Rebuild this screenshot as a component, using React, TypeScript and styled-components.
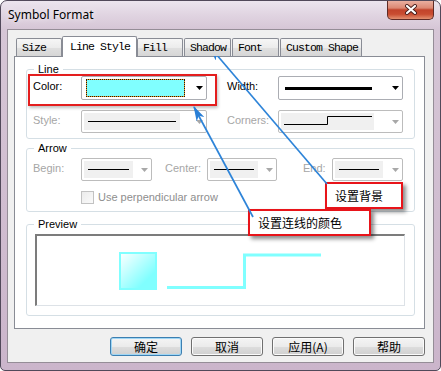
import styled, { createGlobalStyle } from "styled-components";

const GlobalStyle = createGlobalStyle`
  html, body { margin: 0; padding: 0; background: #ffffff; }
  body { font-family: "Liberation Sans", Arial, sans-serif; overflow: hidden; }
  * { box-sizing: border-box; }
`;

// window frame (Win7 basic, lavender)
const Window = styled.div`
  position: relative;
  width: 441px;
  height: 371px;
  border: 1px solid #51495a;
  border-radius: 7px 7px 5px 5px;
  background: linear-gradient(180deg, #ece5ee 0px, #e0d4e1 14px, #d6c6d6 28px, #cbb5cb 100%);
  padding: 0 6px 7px 6px;
  display: flex;
  flex-direction: column;
  overflow: hidden;
`;

const TitleBar = styled.div`
  height: 28px;
  display: flex;
  justify-content: space-between;
  align-items: center;
  padding-left: 1px;
  flex-shrink: 0;
`;

const Title = styled.span`
  font: 12px/16px "Noto Sans", "Liberation Sans", sans-serif;
  color: #000;
  text-shadow: 0 0 6px #ffffff;
`;

const CloseButton = styled.div`
  align-self: flex-start;
  margin-top: -1px;
  width: 47px;
  height: 20px;
  border: 1px solid #5f2b26;
  border-top: none;
  border-radius: 0 0 5px 5px;
  background: linear-gradient(180deg, #ecb4a6 0%, #dc8873 42%, #c2432b 52%, #c94d31 75%, #e39070 100%);
  display: flex;
  align-items: center;
  justify-content: center;
`;

const Client = styled.div`
  flex: 1;
  border: 1px solid #958d97;
  background: #f0f0f0;
  padding: 6px 8px 0 6px;
  display: flex;
  flex-direction: column;
`;

const TabStrip = styled.div`
  position: relative;
  z-index: 1;
  display: flex;
  align-items: flex-end;
  height: 20px;
  padding-left: 2px;
`;

const Tab = styled.div<{ $w: number; $ml?: number; $active?: boolean }>`
  width: ${(p) => p.$w}px;
  margin-left: ${(p) => p.$ml ?? 0}px;
  height: ${(p) => (p.$active ? 21 : 18)}px;
  margin-bottom: ${(p) => (p.$active ? -1 : 0)}px;
  border: 1px solid #898c95;
  border-bottom: none;
  border-radius: 2px 2px 0 0;
  background: ${(p) =>
    p.$active ? "#ffffff" : "linear-gradient(180deg, #f6f6f6 0%, #ececec 50%, #e0e0e0 51%, #d6d6d6 100%)"};
  padding: ${(p) => (p.$active ? "2px 0 0 7px" : "1px 0 0 5px")};
  font: 11.5px/15px "Liberation Mono", "DejaVu Sans Mono", monospace;
  letter-spacing: -0.9px;
  color: #000;
  white-space: nowrap;
`;

const Panel = styled.div`
  height: 273px;
  border: 1px solid #898c95;
  background: #ffffff;
  padding: 6px 9px 0 11px;
  display: flex;
  flex-direction: column;
`;

const Group = styled.fieldset<{ $mt?: number; $pb: number }>`
  margin: ${(p) => p.$mt ?? 0}px 0 0 0;
  padding: 0 11px ${(p) => p.$pb}px 6px;
  border: 1px solid #d5dfe5;
  border-radius: 3px;
  min-width: 0;
`;

const Legend = styled.legend`
  margin-left: 1px;
  padding: 0 4px;
  font-size: 11px;
  line-height: 13px;
  color: #000;
`;

const Row = styled.div<{ $h: number; $mt?: number; $pl?: number }>`
  display: flex;
  align-items: center;
  height: ${(p) => p.$h}px;
  margin-top: ${(p) => p.$mt ?? 0}px;
  padding-left: ${(p) => p.$pl ?? 0}px;
`;

const Label = styled.span<{ $w: number; $ml?: number; $off?: boolean }>`
  flex-shrink: 0;
  width: ${(p) => p.$w}px;
  margin-left: ${(p) => p.$ml ?? 0}px;
  padding-bottom: 3px;
  font-size: 11px;
  line-height: 13px;
  color: ${(p) => (p.$off ? "#a6a6a6" : "#000")};
  white-space: nowrap;
`;

const Combo = styled.div<{ $w: number; $h: number; $off?: boolean }>`
  flex-shrink: 0;
  width: ${(p) => p.$w}px;
  height: ${(p) => p.$h}px;
  border: 1px solid ${(p) => (p.$off ? "#bcbcbc" : "#abadb3")};
  border-radius: 2px;
  background: #ffffff;
  padding: 2px;
  display: flex;
  align-items: stretch;
`;

const Field = styled.div<{ $w: number; $off?: boolean }>`
  width: ${(p) => p.$w}px;
  background: ${(p) => (p.$off ? "#f0f0f0" : "#ffffff")};
  display: flex;
  align-items: center;
  padding: 0 4px;
`;

const Stroke = styled.div<{ $t: number }>`
  flex: 1;
  height: ${(p) => p.$t}px;
  background: #000;
`;

const FocusRing = styled.div`
  margin-left: 2px;
  width: 99px;
  border: 1px dotted #1a1a1a;
  background-color: #f0a020;
  display: flex;
`;

const Swatch = styled.div`
  flex: 1;
  background: #80ffff;
`;

const DropArrow = styled.div`
  margin-left: auto;
  width: 10px;
  display: flex;
  align-items: center;
  justify-content: center;
`;

const CheckRow = styled.div`
  display: flex;
  align-items: center;
  gap: 4px;
  font-size: 11px;
  line-height: 13px;
  color: #8e8e8e;
`;

const CheckBox = styled.div`
  width: 13px;
  height: 13px;
  border: 1px solid #c2c2c2;
  background: linear-gradient(135deg, #ebebeb, #fafafa);
`;

const PreviewBox = styled.div`
  margin: 3px -2px 0 2px;
  height: 72px;
  background: #ffffff;
  border-top: 2px solid #7c7c7c;
  border-left: 2px solid #7c7c7c;
  border-right: 1px solid #dde2e7;
  border-bottom: 1px solid #dde2e7;
`;

const ButtonRow = styled.div`
  display: flex;
  justify-content: flex-end;
  gap: 9px;
  margin-top: 8px;
`;

const Button = styled.button<{ $default?: boolean }>`
  width: 72px;
  height: 19px;
  padding: 0;
  border: 1px solid ${(p) => (p.$default ? "#3c7fb1" : "#707070")};
  border-radius: 3px;
  background: linear-gradient(180deg, #f4f4f4 0%, #ebebeb 50%, #dddddd 51%, #d0d0d0 100%);
  box-shadow: inset 0 0 0 1px ${(p) => (p.$default ? "#9fd6f5" : "#fbfbfb")};
  font: 12px/17px "Noto Sans CJK SC", sans-serif;
  color: #000;
`;

const Highlight = styled.div`
  position: absolute;
  left: 27px;
  top: 73px;
  width: 189px;
  height: 32px;
  border: 2px solid #e41e1e;
  box-shadow: 1px 2px 3px rgba(0, 0, 0, 0.25);
  pointer-events: none;
`;

const Callout = styled.div<{ $x: number; $y: number; $w: number }>`
  position: absolute;
  left: ${(p) => p.$x - 1}px;
  top: ${(p) => p.$y - 1}px;
  width: ${(p) => p.$w}px;
  height: 27px;
  border: 2px solid #e8141a;
  background: #ffffff;
  box-shadow: 3px 3px 4px rgba(0, 0, 0, 0.45);
  padding-left: 8px;
  font: 12px/23px "Noto Sans CJK SC", sans-serif;
  color: #000;
`;

const Overlay = styled.svg`
  position: absolute;
  left: -1px;
  top: -1px;
  pointer-events: none;
`;

function Arrow({ off }: { off?: boolean }) {
  return (
    <DropArrow>
      <svg width="7" height="4" viewBox="0 0 7 4">
        <polygon points="0,0 7,0 3.5,4" fill={off ? "#a8a8a8" : "#000"} />
      </svg>
    </DropArrow>
  );
}

function LineCombo({ w, fw }: { w: number; fw: number }) {
  return (
    <Combo $w={w} $h={23} $off>
      <Field $w={fw} $off>
        <Stroke $t={1} />
      </Field>
      <Arrow off />
    </Combo>
  );
}

export default function App() {
  return (
    <>
      <GlobalStyle />
      <Window>
        <TitleBar>
          <Title>Symbol Format</Title>
          <CloseButton>
            <svg width="14" height="11" viewBox="0 0 14 11">
              <path d="M3 2 L11 9 M11 2 L3 9" stroke="#4a1f1c" strokeWidth="4" strokeLinecap="round" />
              <path d="M3 2 L11 9 M11 2 L3 9" stroke="#ffffff" strokeWidth="2.2" strokeLinecap="round" />
            </svg>
          </CloseButton>
        </TitleBar>

        <Client>
          <TabStrip>
            <Tab $w={46}>Size</Tab>
            <Tab $w={75} $active>
              Line Style
            </Tab>
            <Tab $w={46}>Fill</Tab>
            <Tab $w={47} $ml={1}>
              Shadow
            </Tab>
            <Tab $w={47} $ml={1}>
              Font
            </Tab>
            <Tab $w={82} $ml={1}>
              Custom Shape
            </Tab>
          </TabStrip>

          <Panel>
            <Group $pb={5}>
              <Legend>Line</Legend>
              <Row $h={24}>
                <Label $w={48}>Color:</Label>
                <Combo $w={126} $h={24}>
                  <FocusRing>
                    <Swatch />
                  </FocusRing>
                  <Arrow />
                </Combo>
                <Label $w={51} $ml={20}>
                  Width:
                </Label>
                <Combo $w={125} $h={24}>
                  <Field $w={95}>
                    <Stroke $t={3} />
                  </Field>
                  <Arrow />
                </Combo>
              </Row>
              <Row $h={23} $mt={10}>
                <Label $w={48} $off>
                  Style:
                </Label>
                <LineCombo w={126} fw={96} />
                <Label $w={51} $ml={20} $off>
                  Corners:
                </Label>
                <Combo $w={125} $h={23} $off>
                  <Field $w={93} $off style={{ padding: 0 }}>
                    <svg width="93" height="17" viewBox="0 0 93 17">
                      <path d="M3 11.5 H46.5 V3.5 H91" fill="none" stroke="#000" strokeWidth="1" />
                    </svg>
                  </Field>
                  <Arrow off />
                </Combo>
              </Row>
            </Group>

            <Group $mt={3} $pb={7}>
              <Legend>Arrow</Legend>
              <Row $h={23} $mt={3}>
                <Label $w={48} $off>
                  Begin:
                </Label>
                <LineCombo w={71} fw={49} />
                <Label $w={42} $ml={13} $off>
                  Center:
                </Label>
                <LineCombo w={70} fw={48} />
                <Label $w={29} $ml={26} $off>
                  End:
                </Label>
                <LineCombo w={71} fw={48} />
              </Row>
              <Row $h={13} $mt={10} $pl={48}>
                <CheckRow>
                  <CheckBox />
                  Use perpendicular arrow
                </CheckRow>
              </Row>
            </Group>

            <Group $mt={6} $pb={9}>
              <Legend>Preview</Legend>
              <PreviewBox>
                <svg width="368" height="69" viewBox="0 0 368 69">
                  <defs>
                    <linearGradient id="fillGrad" x1="0" y1="0" x2="1" y2="1">
                      <stop offset="0" stopColor="#ffffff" />
                      <stop offset="0.75" stopColor="#80ffff" />
                    </linearGradient>
                  </defs>
                  <rect x="83" y="17" width="36" height="36" fill="url(#fillGrad)" stroke="#80ffff" strokeWidth="2" />
                  <path d="M130 51.5 H207.5 V19 H284" fill="none" stroke="#80ffff" strokeWidth="3" />
                </svg>
              </PreviewBox>
            </Group>
          </Panel>

          <ButtonRow>
            <Button $default>确定</Button>
            <Button>取消</Button>
            <Button>应用(A)</Button>
            <Button>帮助</Button>
          </ButtonRow>
        </Client>

        <Highlight />
        <Callout $x={325} $y={182} $w={78}>
          设置背景
        </Callout>
        <Callout $x={248} $y={209} $w={123}>
          设置连线的颜色
        </Callout>

        <Overlay width="441" height="371" viewBox="0 0 441 371">
          <defs>
            <marker
              id="head"
              markerWidth="15"
              markerHeight="9"
              refX="14"
              refY="4.5"
              orient="auto"
              markerUnits="userSpaceOnUse"
            >
              <path d="M0 0 L15 4.5 L0 9 L4 4.5 Z" fill="#2a7fd6" />
            </marker>
          </defs>
          <line x1="327" y1="184" x2="210" y2="47" stroke="#2e84d8" strokeWidth="1.7" markerEnd="url(#head)" />
          <line x1="253" y1="217" x2="194" y2="107" stroke="#2e84d8" strokeWidth="1.7" markerEnd="url(#head)" />
        </Overlay>
      </Window>
    </>
  );
}
